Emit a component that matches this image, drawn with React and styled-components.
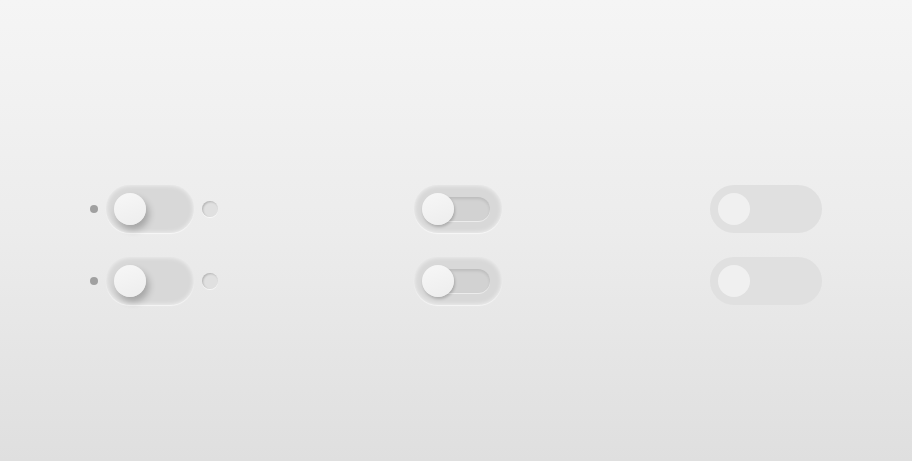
import React from "react"
import styled, { createGlobalStyle } from "styled-components"

const GlobalStyle = createGlobalStyle`
    html, body {
        margin: 0;
        padding: 0;
    }
    body {
        font-family: "Liberation Sans", Arial, sans-serif;
    }
`

const Page = styled.div`
    width: 912px;
    height: 461px;
    background: linear-gradient(to bottom, #f5f5f5 0%, #ececec 50%, #dfdfdf 100%);
    display: flex;
    align-items: center;
`

const Board = styled.div`
    display: flex;
    align-items: center;
    padding: 28px 0 0 90px;
`

const Column = styled.div`
    display: flex;
    flex-direction: column;
    gap: 24px;
    margin-left: ${props => props.offset || 0}px;
`

const Row = styled.div`
    display: flex;
    align-items: center;
`

const Dot = styled.span`
    width: 8px;
    height: 8px;
    border-radius: 50%;
    background: #a0a0a0;
    margin-right: 8px;
`

const Ring = styled.span`
    width: 16px;
    height: 16px;
    border-radius: 50%;
    background: #e0e0e0;
    margin-left: 8px;
    box-shadow: inset 1px 1px 2px rgba(0, 0, 0, 0.2), 0 1px 0 rgba(255, 255, 255, 0.6);
`

const Track = styled.div`
    position: relative;
    width: ${props => props.width}px;
    height: 48px;
    border-radius: 24px;
    box-sizing: border-box;
    padding: 8px;
    display: flex;
    align-items: center;
    background: ${props => props.flat ? "#e0e0e0" : "#d8d8d8"};
    box-shadow: ${props => props.flat
        ? "none"
        : "inset 0 0 5px rgba(255, 255, 255, 0.75), 0 1px 1px rgba(255, 255, 255, 0.6)"};
`

const Groove = styled.div`
    position: absolute;
    left: 12px;
    right: 12px;
    top: 12px;
    bottom: 12px;
    border-radius: 12px;
    background: #d2d2d2;
    box-shadow: inset 0 2px 3px rgba(0, 0, 0, 0.1), 0 1px 0 rgba(255, 255, 255, 0.5);
`

const Knob = styled.div`
    position: relative;
    width: 32px;
    height: 32px;
    border-radius: 50%;
    background: ${props => props.flat ? "#f0f0f0" : "linear-gradient(160deg, #f7f7f7, #ededed)"};
    box-shadow: ${props => props.flat
        ? "none"
        : props.soft
            ? "1px 2px 3px rgba(0, 0, 0, 0.2)"
            : "3px 5px 7px rgba(0, 0, 0, 0.24)"};
`

const Indicator = () => (
    <Row>
        <Dot />
        <Track width={88}>
            <Knob />
        </Track>
        <Ring />
    </Row>
)

const Grooved = () => (
    <Track width={88}>
        <Groove />
        <Knob soft />
    </Track>
)

const Plain = () => (
    <Track width={112} flat>
        <Knob flat />
    </Track>
)

const App = () => {
    return (
        <Page>
            <GlobalStyle />
            <Board>
                <Column>
                    <Indicator />
                    <Indicator />
                </Column>
                <Column offset={196}>
                    <Grooved />
                    <Grooved />
                </Column>
                <Column offset={208}>
                    <Plain />
                    <Plain />
                </Column>
            </Board>
        </Page>
    )
}

export default App
